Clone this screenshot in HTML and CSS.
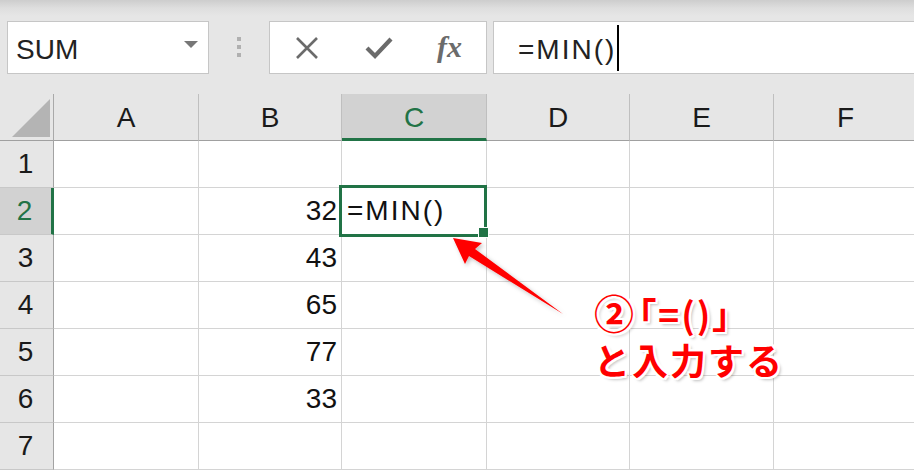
FILE: index.html
```html
<!DOCTYPE html>
<html lang="ja">
<head>
<meta charset="utf-8">
<title>Excel MIN</title>
<link rel="stylesheet" href="styles.css">
</head>
<body>
<div class="app">
  <div class="toolbar">
    <div class="namebox">
      <span class="name">SUM</span>
      <span class="caret"></span>
    </div>
    <div class="grip"><i></i><i></i><i></i></div>
    <div class="buttons">
      <svg class="ico-x" width="24" height="22" viewBox="0 0 24 22"><path d="M2 1 L22 21 M22 1 L2 21" stroke="#6b6b6b" stroke-width="2.6" fill="none"/></svg>
      <svg class="ico-check" width="28" height="24" viewBox="0 0 28 24"><path d="M2 12 L10 20 L26 3" stroke="#6b6b6b" stroke-width="4.2" fill="none"/></svg>
      <span class="fx">fx</span>
    </div>
    <div class="formula">
      <span class="ftext">=MIN()</span><span class="cursor"></span>
    </div>
  </div>

  <div class="sheet">
    <div class="corner"><span class="tri"></span></div>
    <div class="ch">A</div>
    <div class="ch">B</div>
    <div class="ch ch-sel">C</div>
    <div class="ch">D</div>
    <div class="ch">E</div>
    <div class="ch">F</div>

    <div class="rh">1</div><div class="c"></div><div class="c"></div><div class="c"></div><div class="c"></div><div class="c"></div><div class="c"></div>
    <div class="rh rh-sel">2</div><div class="c"></div><div class="c num">32</div><div class="c active">=MIN()</div><div class="c"></div><div class="c"></div><div class="c"></div>
    <div class="rh">3</div><div class="c"></div><div class="c num">43</div><div class="c"></div><div class="c"></div><div class="c"></div><div class="c"></div>
    <div class="rh">4</div><div class="c"></div><div class="c num">65</div><div class="c"></div><div class="c"></div><div class="c"></div><div class="c"></div>
    <div class="rh">5</div><div class="c"></div><div class="c num">77</div><div class="c"></div><div class="c"></div><div class="c"></div><div class="c"></div>
    <div class="rh">6</div><div class="c"></div><div class="c num">33</div><div class="c"></div><div class="c"></div><div class="c"></div><div class="c"></div>
    <div class="rh">7</div><div class="c"></div><div class="c"></div><div class="c"></div><div class="c"></div><div class="c"></div><div class="c"></div>
  </div>

  <svg class="arrow" width="914" height="470" viewBox="0 0 914 470">
    <defs>
      <filter id="sh" x="-20%" y="-20%" width="140%" height="140%">
        <feDropShadow dx="2" dy="2" stdDeviation="2" flood-color="#000" flood-opacity="0.25"/>
      </filter>
    </defs>
    <polygon points="453,238 482,243 475,249 563,314 469,256 465,264" fill="#ff0000" filter="url(#sh)"/>
  </svg>

  <div class="note">
    <div class="l1"><span class="circ">②</span>「=()」</div>
    <div class="l2">と入力する</div>
  </div>
</div>
</body>
</html>
```

FILE: styles.css
```css
* { box-sizing: border-box; }
html, body { margin: 0; padding: 0; }
body {
  width: 914px;
  height: 470px;
  overflow: hidden;
  background: #e6e6e6;
  font-family: "Liberation Sans", Arial, sans-serif;
  color: #1a1a1a;
}
.app {
  position: relative;
  width: 914px;
  height: 470px;
  overflow: hidden;
}
.toolbar {
  height: 94px;
  display: flex;
  align-items: flex-start;
  padding: 21px 0 0 7px;
  background: linear-gradient(#cdcdcd 0px, #dedede 8px, #e6e6e6 16px);
}
.namebox {
  width: 202px;
  height: 53px;
  background: #fff;
  border: 1px solid #c6c6c6;
  display: flex;
  align-items: center;
  justify-content: space-between;
  padding: 0 10px 0 8px;
}
.name { font-size: 28px; color: #222; line-height: 1; margin-top: 4px; }
.caret {
  width: 0; height: 0;
  border-left: 7px solid transparent;
  border-right: 7px solid transparent;
  border-top: 7px solid #777;
  margin-top: -6px;
}
.grip {
  width: 60px;
  height: 53px;
  display: flex;
  flex-direction: column;
  align-items: center;
  padding-top: 16px;
  gap: 4px;
}
.grip i { display: block; width: 4px; height: 4px; background: #b0b0b0; }
.buttons {
  width: 218px;
  height: 53px;
  background: #fff;
  border: 1px solid #c6c6c6;
  display: flex;
  align-items: center;
  padding-left: 25px;
}
.ico-check { margin-left: 46px; }
.fx {
  margin-left: 44px;
  font-family: "Liberation Serif", "Times New Roman", serif;
  font-style: italic;
  font-weight: 700;
  font-size: 30px;
  color: #6b6b6b;
  line-height: 1;
  margin-top: -2px;
}
.formula {
  flex: 1;
  margin-left: 6px;
  margin-right: -4px;
  height: 53px;
  background: #fff;
  border: 1px solid #c6c6c6;
  display: flex;
  align-items: center;
  padding-left: 24px;
}
.ftext { font-size: 28px; letter-spacing: 2px; color: #222; margin-top: 4px; }
.cursor { display: inline-block; width: 2px; height: 46px; background: #000; margin-left: 1px; }

.sheet {
  display: grid;
  grid-template-columns: 54px 145px 143px 145px 143px 144px 144px;
  grid-auto-rows: 47px;
  width: 918px;
  background: #fff;
}
.sheet > div {
  font-size: 28px;
  display: flex;
  align-items: center;
}
.corner {
  background: #e6e6e6;
  border-right: 1px solid #a9a9a9;
  border-bottom: 1px solid #a0a0a0;
  position: relative;
}
.tri {
  position: absolute;
  right: 3px;
  bottom: 3px;
  width: 0; height: 0;
  border-left: 38px solid transparent;
  border-bottom: 38px solid #b4b4b4;
}
.ch {
  background: #e6e6e6;
  border-right: 1px solid #bfbfbf;
  border-bottom: 1px solid #a0a0a0;
  justify-content: center;
  color: #1a1a1a;
  padding-top: 2px;
}
.ch-sel {
  background: #d2d2d2;
  border-bottom: 3px solid #217346;
  color: #217346;
  padding-top: 4px;
}
.rh {
  background: #e6e6e6;
  border-right: 1px solid #a3a3a3;
  border-bottom: 1px solid #c8c8c8;
  justify-content: center;
  padding-right: 2px;
}
.rh-sel {
  background: #d2d2d2;
  border-right: 3px solid #217346;
  color: #217346;
}
.c {
  border-right: 1px solid #d4d4d4;
  border-bottom: 1px solid #d4d4d4;
  color: #111;
}
.num { justify-content: flex-end; padding-right: 4px; }
.active {
  position: relative;
  padding-left: 5px;
  letter-spacing: 2px;
  color: #111;
}
.active::before {
  content: "";
  position: absolute;
  top: -3px; left: -3px; right: -1px; bottom: -3px;
  border: 3px solid #217346;
}
.active::after {
  content: "";
  position: absolute;
  right: -3px;
  bottom: -4px;
  width: 9px;
  height: 9px;
  background: #217346;
  border: 1px solid #fff;
}

.arrow {
  position: absolute;
  left: 0; top: 0;
  pointer-events: none;
}
.note {
  position: absolute;
  left: 594px;
  top: 290px;
  font-family: "Noto Sans CJK JP", "Noto Sans", sans-serif;
  font-weight: 700;
  font-size: 36px;
  line-height: 46px;
  color: #ff0000;
  text-shadow:
    2px 0 0 #fff, -2px 0 0 #fff, 0 2px 0 #fff, 0 -2px 0 #fff,
    2px 2px 0 #fff, -2px -2px 0 #fff, 2px -2px 0 #fff, -2px 2px 0 #fff,
    3px 3px 3px rgba(0,0,0,0.25);
  white-space: nowrap;
}
.l1 { font-feature-settings: "palt"; letter-spacing: 2px; }
.circ { font-size: 40px; line-height: 40px; margin-right: 2px; }
.l2 { letter-spacing: 2px; }
```
